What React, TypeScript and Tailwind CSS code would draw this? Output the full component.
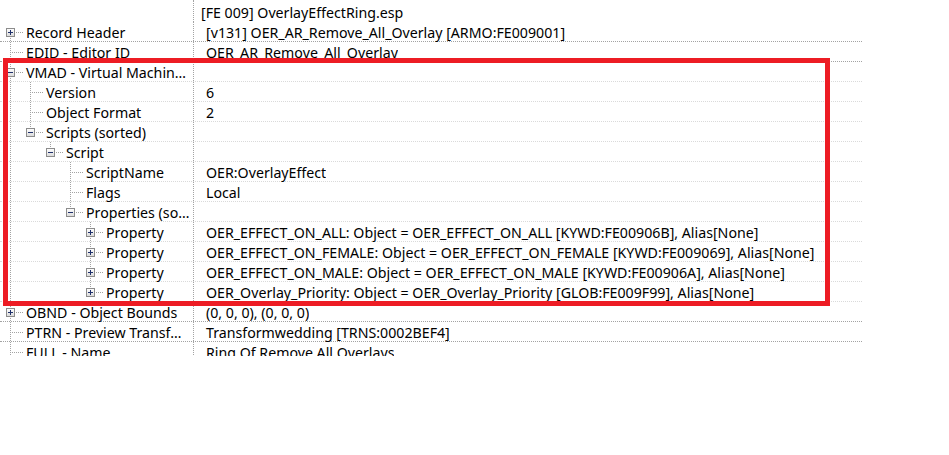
type Guide = { x: number; kind: "full" | "top" | "bottom" };

type Row = {
  label: string;
  value: string;
  level: number;
  exp?: "plus" | "minus";
  guides: Guide[];
  light?: boolean;
};

const G0: Guide = { x: 10, kind: "full" };

const rows: Row[] = [
  { label: "Record Header", value: "[v131] OER_AR_Remove_All_Overlay [ARMO:FE009001]", level: 0, exp: "plus", guides: [{ x: 10, kind: "bottom" }] },
  { label: "EDID - Editor ID", value: "OER_AR_Remove_All_Overlay", level: 0, guides: [G0] },
  { label: "VMAD - Virtual Machin…", value: "", level: 0, exp: "minus", guides: [G0], light: true },
  { label: "Version", value: "6", level: 1, guides: [G0, { x: 30, kind: "full" }], light: true },
  { label: "Object Format", value: "2", level: 1, guides: [G0, { x: 30, kind: "full" }], light: true },
  { label: "Scripts (sorted)", value: "", level: 1, exp: "minus", guides: [G0, { x: 30, kind: "top" }], light: true },
  { label: "Script", value: "", level: 2, exp: "minus", guides: [G0, { x: 50, kind: "top" }], light: true },
  { label: "ScriptName", value: "OER:OverlayEffect", level: 3, guides: [G0, { x: 70, kind: "full" }], light: true },
  { label: "Flags", value: "Local", level: 3, guides: [G0, { x: 70, kind: "full" }], light: true },
  { label: "Properties (so…", value: "", level: 3, exp: "minus", guides: [G0, { x: 70, kind: "top" }], light: true },
  { label: "Property", value: "OER_EFFECT_ON_ALL: Object = OER_EFFECT_ON_ALL [KYWD:FE00906B], Alias[None]", level: 4, exp: "plus", guides: [G0, { x: 90, kind: "full" }], light: true },
  { label: "Property", value: "OER_EFFECT_ON_FEMALE: Object = OER_EFFECT_ON_FEMALE [KYWD:FE009069], Alias[None]", level: 4, exp: "plus", guides: [G0, { x: 90, kind: "full" }], light: true },
  { label: "Property", value: "OER_EFFECT_ON_MALE: Object = OER_EFFECT_ON_MALE [KYWD:FE00906A], Alias[None]", level: 4, exp: "plus", guides: [G0, { x: 90, kind: "full" }], light: true },
  { label: "Property", value: "OER_Overlay_Priority: Object = OER_Overlay_Priority [GLOB:FE009F99], Alias[None]", level: 4, exp: "plus", guides: [G0, { x: 90, kind: "top" }], light: true },
  { label: "OBND - Object Bounds", value: "(0, 0, 0), (0, 0, 0)", level: 0, exp: "plus", guides: [G0] },
  { label: "PTRN - Preview Transf…", value: "Transformwedding [TRNS:0002BEF4]", level: 0, guides: [G0] },
  { label: "FULL - Name", value: "Ring Of Remove All Overlays", level: 0, guides: [G0] },
];

const LINE = "#a3a3a3";

// tree guides + expander box, drawn like the windows treeview
const TreeGlyphs = ({ row }: { row: Row }) => {
  const cx = 10 + row.level * 20;
  const w = cx + 16;
  return (
    <svg width={w} height={20} className="shrink-0" shapeRendering="crispEdges">
      {row.guides.map((g, i) => (
        <line
          key={i}
          x1={g.x + 0.5}
          x2={g.x + 0.5}
          y1={g.kind === "bottom" ? 10 : 0}
          y2={g.kind === "top" ? 10 : 20}
          stroke={LINE}
          strokeDasharray="1 1"
        />
      ))}
      {row.level > 0 && !row.guides.some((g) => g.x === cx) && (
        <line x1={cx + 0.5} x2={cx + 0.5} y1={0} y2={10} stroke={LINE} strokeDasharray="1 1" />
      )}
      <line x1={cx} x2={cx + 14} y1={10.5} y2={10.5} stroke={LINE} strokeDasharray="1 1" />
      {row.exp && (
        <g>
          <defs>
            <linearGradient id="expbox" x1="0" y1="0" x2="0" y2="1">
              <stop offset="0" stopColor="#ffffff" />
              <stop offset="1" stopColor="#d9d9d9" />
            </linearGradient>
          </defs>
          <rect x={cx - 3.5} y={6.5} width={8} height={8} fill="url(#expbox)" stroke="#8c8c8c" />
          <line x1={cx - 2} x2={cx + 3} y1={10.5} y2={10.5} stroke="#1e2f6b" />
          {row.exp === "plus" && <line x1={cx + 0.5} x2={cx + 0.5} y1={8} y2={13} stroke="#1e2f6b" />}
        </g>
      )}
    </svg>
  );
};

export default function App() {
  return (
    <div className="relative w-[949px] h-[455px] bg-white overflow-hidden text-[14.2px] leading-[20px] text-black [font-family:'Noto_Sans','Open_Sans',sans-serif]">
      <div className="w-[862px] h-[356px] overflow-hidden flex flex-col">
        <div className="flex h-[22px] shrink-0">
          <div className="w-[194px] shrink-0 border-r border-dotted border-[#a3a3a3]" />
          <div className="pl-[7px] pt-[3px] whitespace-nowrap">[FE 009] OverlayEffectRing.esp</div>
        </div>
        {rows.map((row, i) => (
          <div
            key={i}
            className={`flex h-[20px] shrink-0 border-b border-dotted ${row.light ? "border-[#dadada]" : "border-[#a3a3a3]"}`}
          >
            <div className="w-[194px] shrink-0 flex items-start overflow-x-clip whitespace-nowrap border-r border-dotted border-[#a3a3a3]">
              <TreeGlyphs row={row} />
              <span className="pt-[1px]">{row.label}</span>
            </div>
            <div className="pl-[12px] pt-[1px] whitespace-nowrap overflow-x-clip">{row.value}</div>
          </div>
        ))}
      </div>
      {/* red annotation rectangle drawn over the tree */}
      <div className="absolute left-[3px] top-[58px] w-[827px] h-[248px] border-[5px] border-[#ed1c24] pointer-events-none" />
    </div>
  );
}
